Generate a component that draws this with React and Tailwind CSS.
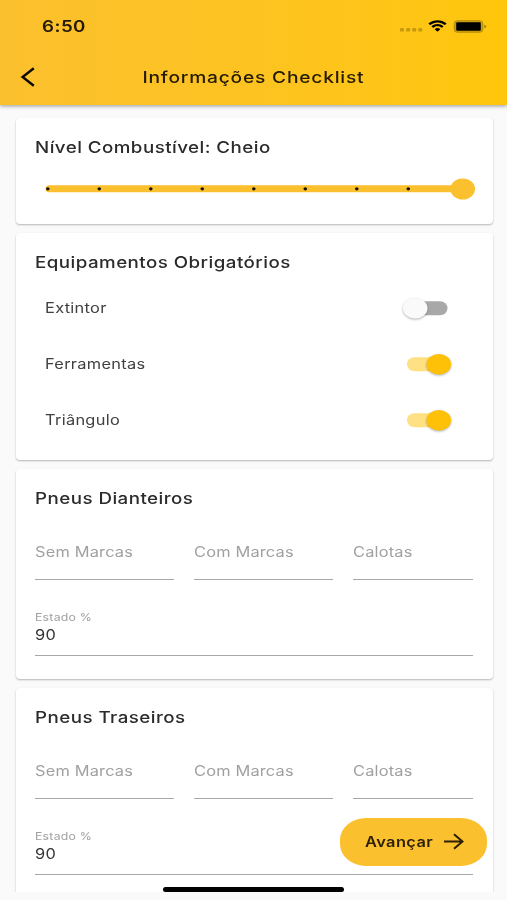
import { useState } from 'react'

const AXLES = ['Pneus Dianteiros', 'Pneus Traseiros']

// Wide lettering, grows from the left edge
function Wide({ children, className = '' }) {
  return (
    <span className={`block w-max origin-left scale-x-[1.17] whitespace-nowrap ${className}`}>
      {children}
    </span>
  )
}

// ── Status bar ───────────────────────────────────────────────────
function StatusBar() {
  return (
    <div className="flex h-[52px] items-center justify-between pl-[42px] pr-[20px]">
      <Wide className="text-[16px] leading-5 font-semibold tracking-[0.4px]">6:50</Wide>
      <div className="flex items-center">
        <svg width="24" height="4" viewBox="0 0 24 4" className="mt-[8px] mr-[5px]" fill="#000" fillOpacity="0.22">
          <rect x="1" y="0" width="4" height="3.6" rx="1.2" />
          <rect x="7.1" y="0" width="4" height="3.6" rx="1.2" />
          <rect x="13.2" y="0" width="4" height="3.6" rx="1.2" />
          <rect x="19.3" y="0" width="4" height="3.6" rx="1.2" />
        </svg>
        <svg width="19" height="12" viewBox="0 0 17 12" preserveAspectRatio="none" className="mr-[6px]">
          <path
            d="M8.5 2.4c2.4 0 4.6.9 6.3 2.6.1.1.3.1.4 0l1.2-1.2c.1-.1.1-.3 0-.5-4.4-4.2-11.4-4.2-15.8 0-.1.1-.1.3 0 .5L1.8 5c.1.1.3.1.4 0C3.9 3.3 6.1 2.4 8.5 2.4zM8.5 6.3c1.3 0 2.6.5 3.5 1.4.1.1.3.1.5 0l1.2-1.2c.1-.1.1-.3 0-.5-2.9-2.8-7.5-2.8-10.4 0-.1.1-.1.3 0 .5l1.2 1.2c.1.1.3.1.5 0 .9-.9 2.2-1.4 3.5-1.4zM10.8 8.9c.1.1.1.3 0 .5l-2.1 2.1c-.1.1-.3.1-.4 0L6.2 9.4c-.1-.2-.1-.4 0-.5 1.3-1.1 3.3-1.1 4.6 0z"
            fill="#000"
          />
        </svg>
        <svg width="34" height="13" viewBox="0 0 34 13">
          <rect x="1" y="0.6" width="29" height="11.8" rx="3.5" fill="#000" fillOpacity="0.2" stroke="#000" strokeOpacity="0.15" />
          <rect x="3.2" y="2.2" width="24.6" height="8.6" rx="1.2" fill="#000" />
          <path d="M31.3 4.7v3.6c1-.3 1.8-1 1.8-1.8s-.8-1.5-1.8-1.8z" fill="#000" fillOpacity="0.4" />
        </svg>
      </div>
    </div>
  )
}

function Header() {
  return (
    <header className="relative z-10 h-[105px] shrink-0 bg-linear-to-r from-[#fbc02d] to-[#ffc60a] text-[#241a05] shadow-[0_1px_4px_rgba(0,0,0,0.4)]">
      <StatusBar />
      <div className="flex h-[50px] items-center">
        <button className="flex w-[56px] justify-start pl-[20px]">
          <svg width="16" height="20" viewBox="0 0 16 20" fill="none" stroke="#0d0900" strokeWidth="2.4">
            <path d="M13.8 1.2 2.6 10l11.2 8.8" />
          </svg>
        </button>
        <h1 className="flex flex-1 justify-center pr-[56px] text-[16px] leading-5 font-medium">
          <span className="block origin-center scale-x-[1.2] tracking-[0.65px] whitespace-nowrap">
            Informações Checklist
          </span>
        </h1>
      </div>
    </header>
  )
}

function Card({ title, className = '', children }) {
  return (
    <section
      className={`shrink-0 rounded-[4px] bg-white pr-[20px] pl-[19.5px] shadow-[0_1px_2px_rgba(0,0,0,0.28)] ${className}`}
    >
      <h2 className="pt-[19px] text-[16px] leading-5 font-medium text-[#2b2b2b]">
        <Wide className="tracking-[0.4px]">{title}</Wide>
      </h2>
      {children}
    </section>
  )
}

// ── Fuel level slider ────────────────────────────────────────────
function FuelSlider() {
  return (
    <svg width="437" height="24" viewBox="0 0 437 24" className="mt-[20px] overflow-visible">
      <rect x="10.5" y="8.3" width="420" height="7" rx="3.5" fill="#fbc02d" />
      {[...Array(8)].map((_, i) => (
        <ellipse key={i} cx={12.8 + i * 51.5} cy="11.8" rx="1.8" ry="1.6" fill="#17120a" />
      ))}
      <ellipse cx="427.7" cy="12" rx="12.3" ry="10.5" fill="#fbc02d" />
    </svg>
  )
}

function Toggle({ on, onClick }) {
  return (
    <button onClick={onClick} className="flex h-6 w-[50px] items-center">
      <svg width="50" height="26" viewBox="0 0 50 26" className="overflow-visible">
        <rect x="4" y="6.2" width="40.5" height="14" rx="7.5" fill={on ? '#ffe082' : '#a8a8a8'} />
        <ellipse
          cx={on ? 35.8 : 12.2}
          cy="13.2"
          rx="12.3"
          ry="10.2"
          fill={on ? '#ffc107' : '#fafafa'}
          className="drop-shadow-[0_1px_1px_rgba(0,0,0,0.3)]"
        />
      </svg>
    </button>
  )
}

function EquipmentList() {
  const [equipment, setEquipment] = useState([
    { name: 'Extintor', on: false },
    { name: 'Ferramentas', on: true },
    { name: 'Triângulo', on: true },
  ])

  const toggle = name =>
    setEquipment(equipment.map(e => (e.name === name ? { ...e, on: !e.on } : e)))

  return (
    <ul className="pt-[8px]">
      {equipment.map(item => (
        <li key={item.name} className="flex h-[56px] items-center justify-between pr-[20px] pl-[10px]">
          <Wide className="text-[14px] leading-5 tracking-[0.25px] text-[#404040]">{item.name}</Wide>
          <Toggle on={item.on} onClick={() => toggle(item.name)} />
        </li>
      ))}
    </ul>
  )
}

// ── Tyre form ────────────────────────────────────────────────────
function Field({ label, className = '' }) {
  return (
    <div className={`flex h-[38px] border-b border-[#a8a8a8] text-[14px] leading-5 text-[#a0a0a0] ${className}`}>
      <Wide className="h-5 tracking-[0.15px]">{label}</Wide>
    </div>
  )
}

function TyreForm() {
  return (
    <>
      <div className="mt-[34px] flex gap-[20px]">
        <Field label="Sem Marcas" className="w-[139px]" />
        <Field label="Com Marcas" className="w-[139px]" />
        <Field label="Calotas" className="flex-1" />
      </div>
      <div className="mt-[31px] h-[45px] border-b border-[#a8a8a8]">
        <Wide className="text-[10.5px] leading-[14px] tracking-[0.2px] text-[#a0a0a0]">Estado %</Wide>
        <Wide className="text-[14px] leading-5 tracking-[0.2px] text-[#333]">90</Wide>
      </div>
    </>
  )
}

export default function App() {
  return (
    <div className="relative flex h-[900px] w-[507px] flex-col overflow-hidden bg-[#fafafa] font-['Inter',sans-serif]">
      <Header />

      <main className="flex h-[786.5px] flex-col gap-[9px] overflow-hidden pt-[12.5px] pr-[14.5px] pl-[15.5px]">
        <Card title="Nível Combustível: Cheio" className="h-[106.5px]">
          <FuelSlider />
        </Card>
        <Card title="Equipamentos Obrigatórios" className="h-[227px]">
          <EquipmentList />
        </Card>
        {AXLES.map(axle => (
          <Card key={axle} title={axle} className="h-[210px]">
            <TyreForm />
          </Card>
        ))}
      </main>

      <button className="absolute right-[20px] bottom-[34.5px] z-20 flex h-[47.5px] w-[147px] items-center rounded-[26px/22px] bg-[#fbc02d] pl-[25px] text-[#2b1f04]">
        <Wide className="text-[14px] leading-5 font-semibold tracking-[0.35px]">Avançar</Wide>
        <svg width="20" height="17" viewBox="0 0 20 17" fill="none" stroke="#2b1f04" strokeWidth="2" className="absolute left-[104px]">
          <path d="M0 8.5h18.5M10 1.2l8.5 7.3-8.5 7.3" />
        </svg>
      </button>

      {/* Home indicator */}
      <div className="absolute bottom-[8px] left-[163px] z-30 h-[5px] w-[181px] rounded-full bg-black" />
    </div>
  )
}
